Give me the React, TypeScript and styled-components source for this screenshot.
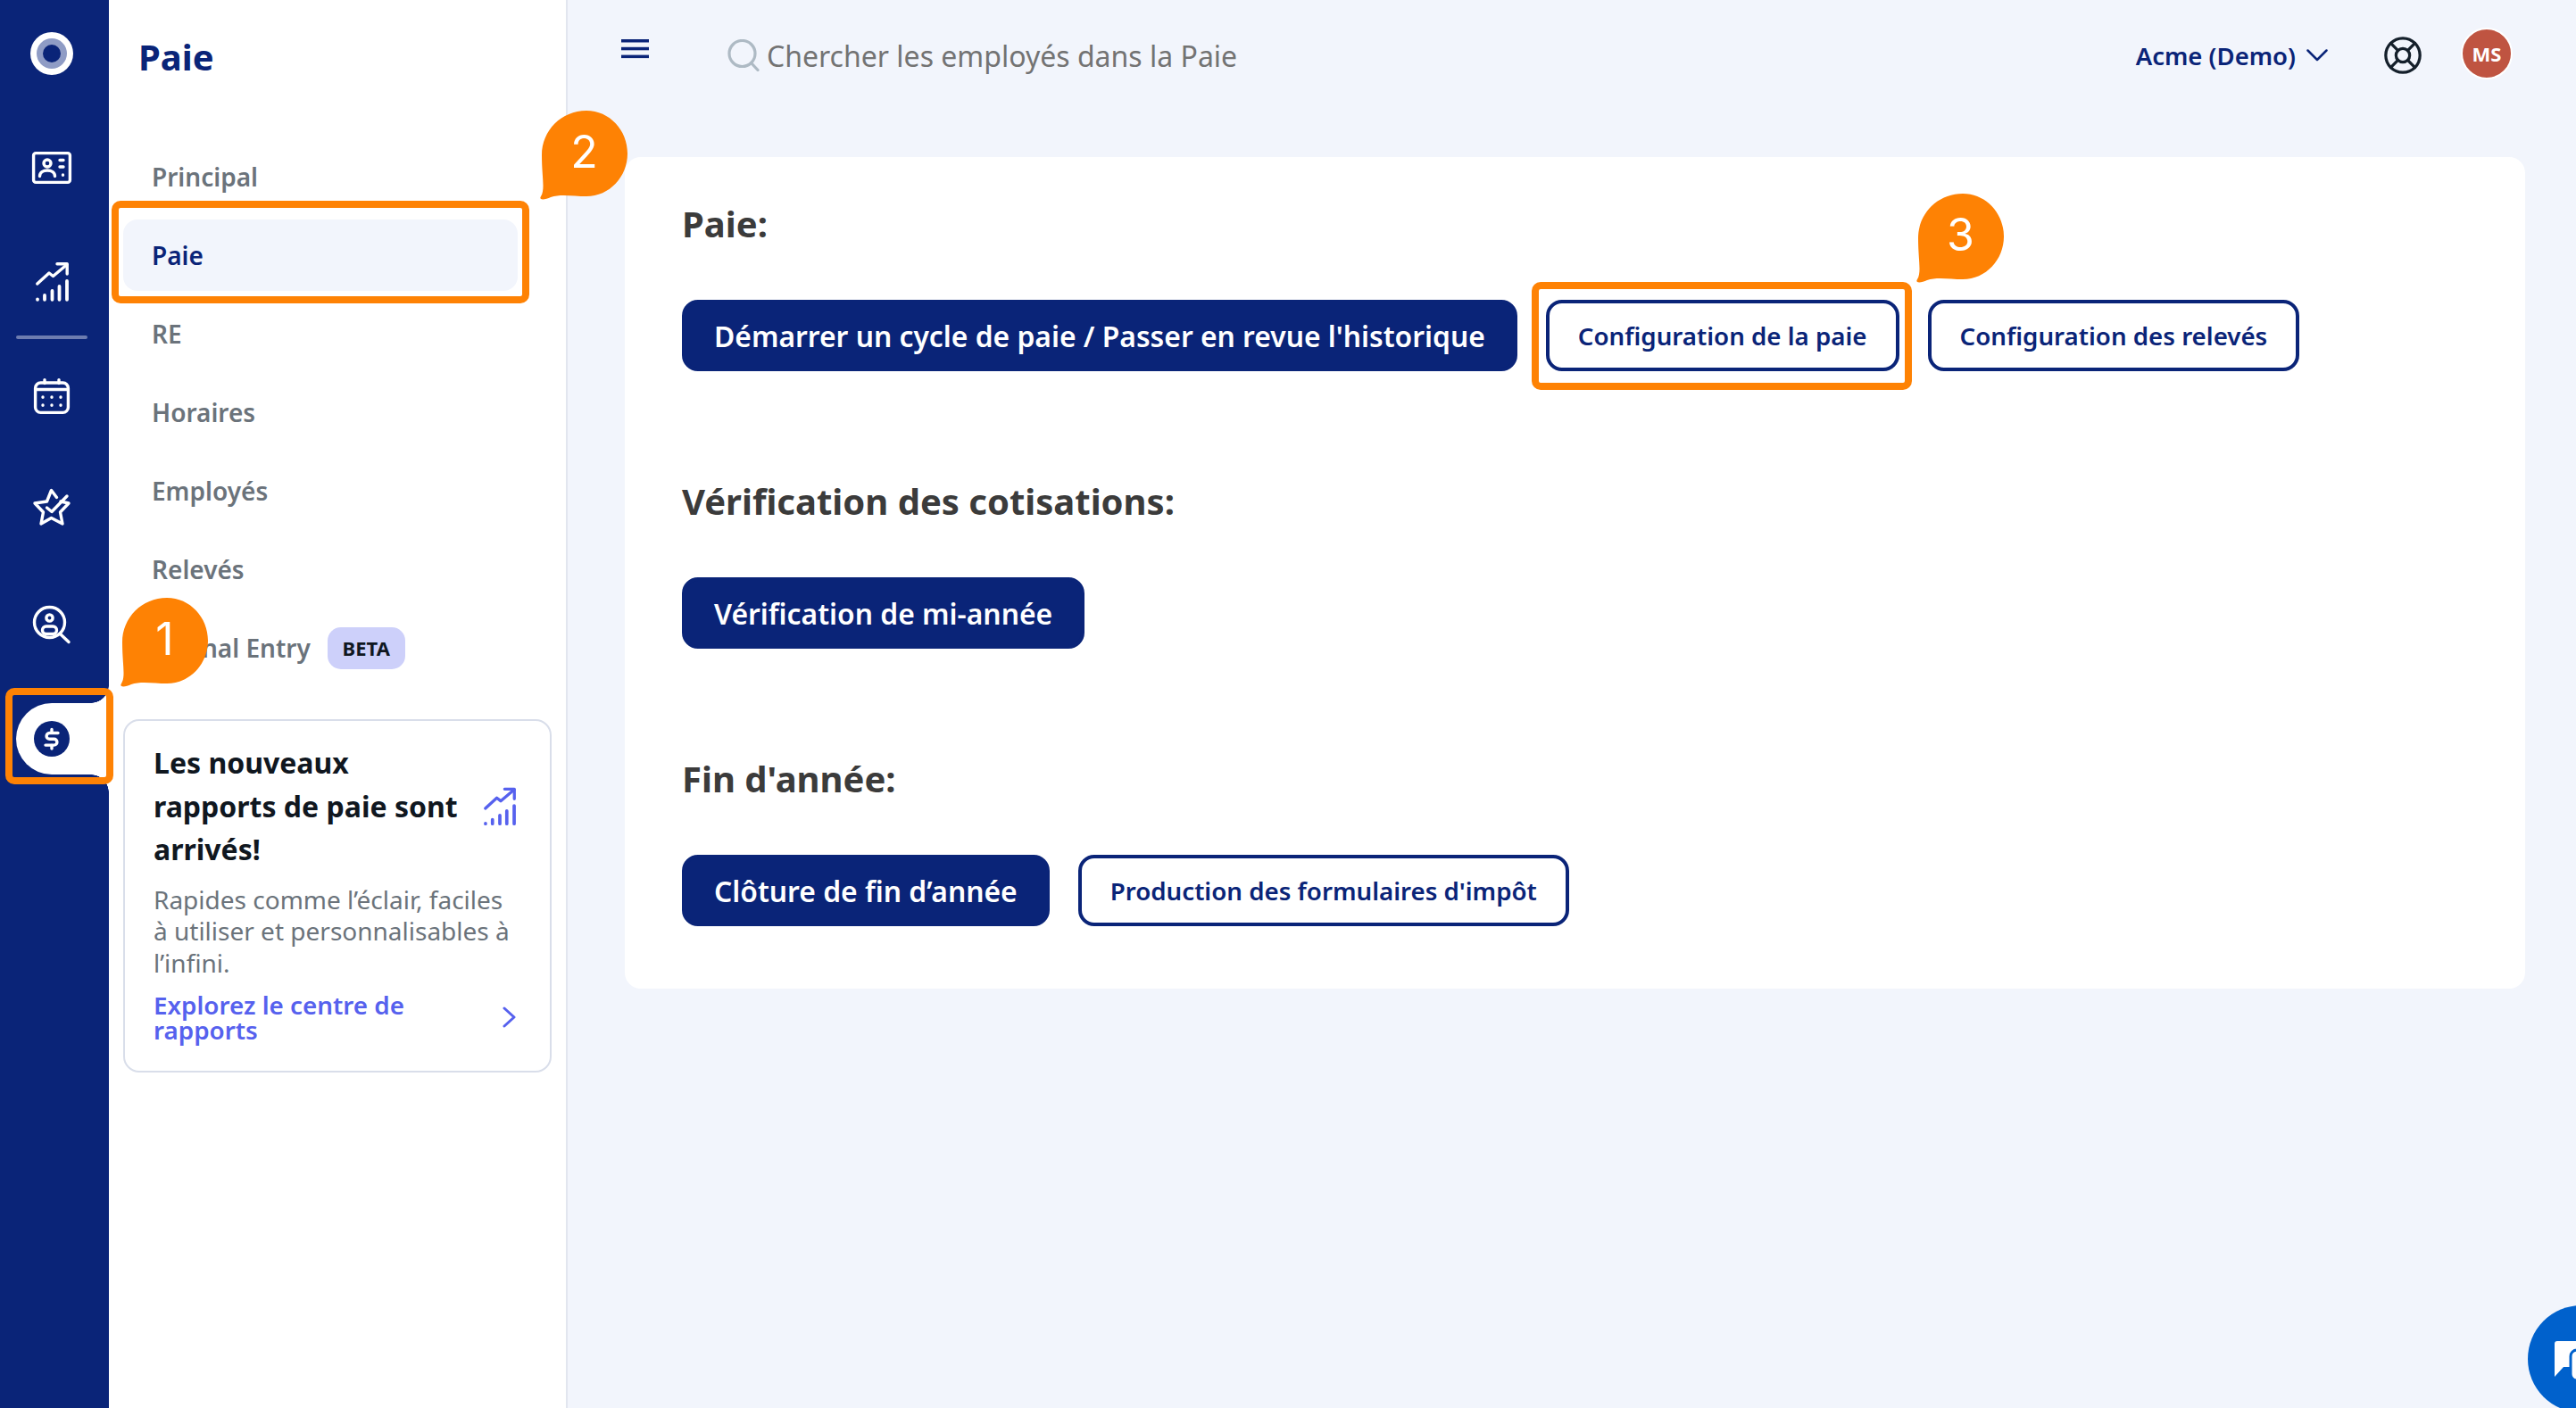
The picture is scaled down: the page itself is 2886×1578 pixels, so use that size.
import React from "react";
import styled, { createGlobalStyle } from "styled-components";
import { LifeBuoy } from "lucide-react";

const NAVY = "#0a2478";
const ORANGE = "#fe8204";
const INDIGO = "#5661ee";

const GlobalStyle = createGlobalStyle`
  html, body {
    margin: 0;
    padding: 0;
    height: 100%;
    overflow: hidden;
    background: #f2f5fc;
    font-family: "Noto Sans", "Open Sans", sans-serif;
  }
  * { box-sizing: border-box; }
`;

const Page = styled.div`
  position: relative;
  display: flex;
  width: 100vw;
  height: 100vh;
  overflow: hidden;
`;

const Rail = styled.nav`
  flex: 0 0 122px;
  display: flex;
  flex-direction: column;
  background: ${NAVY};
  color: #fff;
`;

const RailItem = styled.div`
  display: flex;
  align-items: center;
  justify-content: center;
  flex: 0 0 128px;
  padding-right: 6px;

  &:first-child {
    margin-top: -4px;
  }
`;

const RailDivider = styled.div`
  height: 4px;
  margin: -4px 24px 0 18px;
  border-radius: 2px;
  background: #6d7cb0;
`;

const ActiveSlot = styled.div`
  display: flex;
  align-items: center;
  flex: 0 0 128px;
  padding-left: 18px;
`;

const ActivePill = styled.div`
  position: relative;
  display: flex;
  align-items: center;
  width: 100%;
  height: 80px;
  padding-left: 20px;
  background: #fff;
  border-radius: 40px 0 0 40px;

  &::before,
  &::after {
    content: "";
    position: absolute;
    right: 0;
    width: 20px;
    height: 20px;
  }
  &::before {
    bottom: 100%;
    background: radial-gradient(circle at 0 0, transparent 19.5px, #fff 20px);
  }
  &::after {
    top: 100%;
    background: radial-gradient(circle at 0 100%, transparent 19.5px, #fff 20px);
  }
`;

const SidePanel = styled.aside`
  flex: 0 0 514px;
  padding: 40px 14px 0 16px;
  background: #fff;
  border-right: 2px solid #e2e6ef;
`;

const PanelTitle = styled.h1`
  margin: 0 0 70px;
  padding-left: 17px;
  font-size: 40px;
  line-height: 48px;
  font-weight: 700;
  color: ${NAVY};
`;

const NavList = styled.div`
  display: flex;
  flex-direction: column;
  gap: 8px;
  margin-right: 40px;
`;

const NavItem = styled.div<{ $active?: boolean }>`
  display: flex;
  align-items: center;
  gap: 19px;
  height: 80px;
  padding-left: 32px;
  border-radius: 16px;
  font-size: 28px;
  font-weight: 600;
  color: ${(p) => (p.$active ? NAVY : "#6b737b")};
  background: ${(p) => (p.$active ? "#f2f5fc" : "transparent")};
`;

const BetaBadge = styled.span`
  display: flex;
  align-items: center;
  justify-content: center;
  width: 87px;
  height: 47px;
  border-radius: 15px;
  background: #cdd0fa;
  color: #10171f;
  font-size: 22px;
  font-weight: 700;
`;

const PromoCard = styled.section`
  margin-top: 40px;
  padding: 23px 38px 0 32px;
  width: 480px;
  height: 396px;
  border: 2px solid #d9deea;
  border-radius: 18px;
`;

const PromoHead = styled.div`
  display: flex;
  align-items: center;
  justify-content: space-between;
`;

const PromoTitle = styled.h2`
  margin: 0;
  width: 350px;
  font-size: 32px;
  line-height: 48.5px;
  font-weight: 700;
  color: #10171f;
`;

const PromoText = styled.p`
  margin: 14px 0 0;
  width: 405px;
  font-size: 28px;
  line-height: 35.5px;
  color: #6b737b;
`;

const PromoLink = styled.div`
  display: flex;
  align-items: center;
  justify-content: space-between;
  margin-top: 15px;
  font-size: 27.8px;
  line-height: 28px;
  font-weight: 600;
  color: ${INDIGO};
`;

const Main = styled.main`
  flex: 1;
  min-width: 0;
  padding: 0 57px 0 64px;
`;

const TopBar = styled.header`
  display: flex;
  align-items: center;
  height: 124px;
  margin-bottom: 52px;
  margin-right: 15px;
`;

const MenuButton = styled.div`
  display: flex;
  margin-left: -4px;
  margin-right: 88px;
  margin-top: -14px;
`;

const SearchBox = styled.div`
  flex: 1;
  display: flex;
  align-items: center;
  gap: 8px;
  font-size: 32px;
  color: #737373;
`;

const OrgSwitch = styled.div`
  display: flex;
  align-items: center;
  gap: 12px;
  margin-right: 61px;
  font-size: 27.5px;
  font-weight: 600;
  color: ${NAVY};
`;

const HelpIcon = styled.div`
  display: flex;
  margin-right: 42px;
  color: #15202b;
`;

const Avatar = styled.div`
  display: flex;
  align-items: center;
  justify-content: center;
  width: 58px;
  height: 58px;
  margin-top: -4px;
  margin-right: -1px;
  border: 2px solid #fff;
  border-radius: 50%;
  background: #bf5441;
  color: #fff;
  font-size: 22px;
  font-weight: 700;
`;

const Card = styled.div`
  display: flex;
  flex-direction: column;
  gap: 120px;
  height: 932px;
  padding: 49px 64px 70px;
  background: #fff;
  border-radius: 18px;
`;

const Section = styled.section`
  display: flex;
  flex-direction: column;
  gap: 60px;
`;

const SectionTitle = styled.h3`
  margin: 0 0 -1px;
  font-size: 40px;
  line-height: 52px;
  font-weight: 700;
  color: #3b3b3b;
`;

const ButtonRow = styled.div`
  display: flex;
  gap: 32px;
`;

const Button = styled.div<{ $outline?: boolean }>`
  display: flex;
  align-items: center;
  height: 80px;
  padding: 0 32px;
  border: 4px solid ${NAVY};
  border-radius: 18px;
  white-space: nowrap;
  font-weight: 600;
  font-size: ${(p) => (p.$outline ? "27.7px" : "31.8px")};
  color: ${(p) => (p.$outline ? NAVY : "#fff")};
  background: ${(p) => (p.$outline ? "#fff" : NAVY)};
`;

const Highlight = styled.div<{ $x: number; $y: number; $w: number; $h: number }>`
  position: absolute;
  left: ${(p) => p.$x}px;
  top: ${(p) => p.$y}px;
  width: ${(p) => p.$w}px;
  height: ${(p) => p.$h}px;
  border: 8px solid ${ORANGE};
  border-radius: 10px;
`;

const Callout = styled.div<{ $x: number; $y: number }>`
  position: absolute;
  left: ${(p) => p.$x}px;
  top: ${(p) => p.$y}px;
  display: flex;
  align-items: center;
  justify-content: center;
  width: 100px;
  height: 100px;
  padding: 0 0 8px 3px;
  color: #fff;
  font-family: Inter, "Liberation Sans", sans-serif;
  font-size: 50px;
  font-weight: 400;

  svg {
    position: absolute;
    left: 0;
    top: 0;
  }
  span {
    position: relative;
  }
`;

const ChatLauncher = styled.div`
  position: fixed;
  left: 2832px;
  top: 1463px;
  width: 120px;
  height: 120px;
  border-radius: 50%;
  background: #0061cc;
`;

const ChatGlyph = styled.svg`
  position: absolute;
  left: 30px;
  top: 40px;
`;

const RailStroke = styled.svg`
  display: block;
  overflow: visible;
  fill: none;
  stroke: currentColor;
  stroke-width: 3.4;
  stroke-linecap: round;
  stroke-linejoin: round;
`;

const PromoIcon = styled.span`
  color: ${INDIGO};
`;

const TrendIcon = ({ width, height }: { width: number; height: number }) => (
  <RailStroke width={width} height={height} viewBox="0 0 37 44">
    <path d="M1.8 24 15 12l4.5 3.5L35 2.5" />
    <path d="M24 1.8h11.2V13" />
    <g strokeWidth="3.8">
      <path d="M2 41.5v.3M10 37v4.8M18.5 32v9.8M26.5 27v14.8M35 21v20.8" />
    </g>
  </RailStroke>
);

const callouts = [
  { n: "1", x: 133, y: 670 },
  { n: "2", x: 603, y: 124 },
  { n: "3", x: 2145, y: 217 },
];

export default function App() {
  return (
    <Page>
      <GlobalStyle />
      <Rail>
        <RailItem>
          <svg width="48" height="48" viewBox="0 0 48 48">
            <circle cx="24" cy="24" r="24" fill="#fff" />
            <circle cx="24" cy="24" r="17" fill="#8f9cc5" />
            <circle cx="24" cy="24" r="10" fill={NAVY} />
          </svg>
        </RailItem>
        <RailItem>
          <RailStroke width="44" height="36" viewBox="0 0 44 36">
            <rect x="1.6" y="1.6" width="40.8" height="32.8" rx="2.5" />
            <circle cx="17" cy="13" r="4" />
            <path d="M8.5 27.5c0-4.500 3.800-6.500 8.500-6.500s8.500 2 8.500 6.500" />
            <path d="M31 9.500h4M31 17h4M34.500 26v.2" />
          </RailStroke>
        </RailItem>
        <RailItem>
          <TrendIcon width={37} height={44} />
        </RailItem>
        <RailDivider />
        <RailItem>
          <RailStroke width="40" height="40" viewBox="0 0 40 40">
            <rect x="1.600" y="5" width="36.800" height="33.400" rx="6" />
            <path d="M12 1.600v4M28 1.600v4M2 12.500h36" />
            <path d="M10 21v.2M20 21v.2M30 21v.2M10 30v.2M20 30v.2M30 30v.2" />
          </RailStroke>
        </RailItem>
        <RailItem>
          <RailStroke width="42" height="42" viewBox="0 4 42 42">
            <path d="M26.500 10.500 20.500 2.500l-5 12.500L2 17l9.500 10L9 40l11.500-6.500L33 40l-2.500-13L40 17l-9-2" />
            <path d="M15.500 22l5.500 4.500L38 9" />
          </RailStroke>
        </RailItem>
        <RailItem>
          <RailStroke width="44" height="44" viewBox="0 0 44 44">
            <circle cx="19.500" cy="19.500" r="17" />
            <circle cx="19.500" cy="14.500" r="3.600" />
            <rect x="11.500" y="24" width="16" height="8.500" rx="4.200" />
            <path d="M31.500 32.500 41 41.500" />
          </RailStroke>
        </RailItem>
        <ActiveSlot>
          <ActivePill>
            <svg width="40" height="40" viewBox="0 0 40 40">
              <circle cx="20" cy="20" r="20" fill={NAVY} />
              <path
                d="M27 13.500h-9.500a3.400 3.400 0 0 0 0 6.800h5a3.400 3.400 0 0 1 0 6.800H13M20 9.500v4M20 27v4"
                fill="none"
                stroke="#fff"
                strokeWidth="3.400"
                strokeLinecap="round"
                strokeLinejoin="round"
              />
            </svg>
          </ActivePill>
        </ActiveSlot>
      </Rail>

      <SidePanel>
        <PanelTitle>Paie</PanelTitle>
        <NavList>
          <NavItem>Principal</NavItem>
          <NavItem $active>Paie</NavItem>
          <NavItem>RE</NavItem>
          <NavItem>Horaires</NavItem>
          <NavItem>Employés</NavItem>
          <NavItem>Relevés</NavItem>
          <NavItem>
            Journal Entry
            <BetaBadge>BETA</BetaBadge>
          </NavItem>
        </NavList>
        <PromoCard>
          <PromoHead>
            <PromoTitle>Les nouveaux rapports de paie sont arrivés!</PromoTitle>
            <PromoIcon>
              <TrendIcon width={36} height={44} />
            </PromoIcon>
          </PromoHead>
          <PromoText>Rapides comme l’éclair, faciles à utiliser et personnalisables à l’infini.</PromoText>
          <PromoLink>
            <span>
              Explorez le centre de
              <br />
              rapports
            </span>
            <svg width="16" height="24" viewBox="0 0 16 24" fill="none" stroke={INDIGO} strokeWidth="3" strokeLinecap="round" strokeLinejoin="round">
              <path d="M3 2l11 10L3 22" />
            </svg>
          </PromoLink>
        </PromoCard>
      </SidePanel>

      <Main>
        <TopBar>
          <MenuButton>
            <svg width="31" height="22" viewBox="0 0 31 22" fill={NAVY}>
              <rect width="31" height="3.500" />
              <rect y="8.800" width="31" height="3.500" />
              <rect y="17.600" width="31" height="3.500" />
            </svg>
          </MenuButton>
          <SearchBox>
            <svg width="36" height="36" viewBox="0 0 36 36" fill="none" stroke="#aebac4" strokeWidth="3.200" strokeLinecap="round">
              <circle cx="16.500" cy="16" r="14.500" />
              <path d="M27 27l7 7.500" />
            </svg>
            Chercher les employés dans la Paie
          </SearchBox>
          <OrgSwitch>
            Acme (Demo)
            <svg width="24" height="14" viewBox="0 0 24 14" fill="none" stroke={NAVY} strokeWidth="2.500" strokeLinecap="round" strokeLinejoin="round">
              <path d="M1.500 1.500 12 12 22.500 1.500" />
            </svg>
          </OrgSwitch>
          <HelpIcon>
            <LifeBuoy size={46} strokeWidth={1.7} />
          </HelpIcon>
          <Avatar>MS</Avatar>
        </TopBar>

        <Card>
          <Section>
            <SectionTitle>Paie:</SectionTitle>
            <ButtonRow>
              <Button>Démarrer un cycle de paie / Passer en revue l'historique</Button>
              <Button $outline>Configuration de la paie</Button>
              <Button $outline>Configuration des relevés</Button>
            </ButtonRow>
          </Section>
          <Section>
            <SectionTitle>Vérification des cotisations:</SectionTitle>
            <ButtonRow>
              <Button>Vérification de mi-année</Button>
            </ButtonRow>
          </Section>
          <Section>
            <SectionTitle>Fin d'année:</SectionTitle>
            <ButtonRow>
              <Button>Clôture de fin d’année</Button>
              <Button $outline>Production des formulaires d'impôt</Button>
            </ButtonRow>
          </Section>
        </Card>
      </Main>

      <Highlight $x={6} $y={771} $w={121} $h={108} />
      <Highlight $x={125} $y={225} $w={468} $h={115} />
      <Highlight $x={1716} $y={316} $w={426} $h={121} />
      {callouts.map((c) => (
        <Callout key={c.n} $x={c.x} $y={c.y}>
          <svg width="100" height="100" viewBox="0 0 100 100">
            <path
              d="M3 96C8 88 4 74 4 50 4 22 26 0 54 0c26 0 46 22 46 48S80 96 54 96c-14 0-29-3-40 1-6 3-14 4-11-1Z"
              fill={ORANGE}
            />
          </svg>
          <span>{c.n}</span>
        </Callout>
      ))}
      <ChatLauncher>
        <ChatGlyph width="60" height="44" viewBox="0 0 60 44">
          <path d="M3 0h34a3 3 0 0 1 3 3v26H10L0 40V3a3 3 0 0 1 3-3Z" fill="#fff" />
          <rect x="18" y="10" width="40" height="34" rx="7" fill="#fff" stroke="#0061cc" strokeWidth="3" />
        </ChatGlyph>
      </ChatLauncher>
    </Page>
  );
}
